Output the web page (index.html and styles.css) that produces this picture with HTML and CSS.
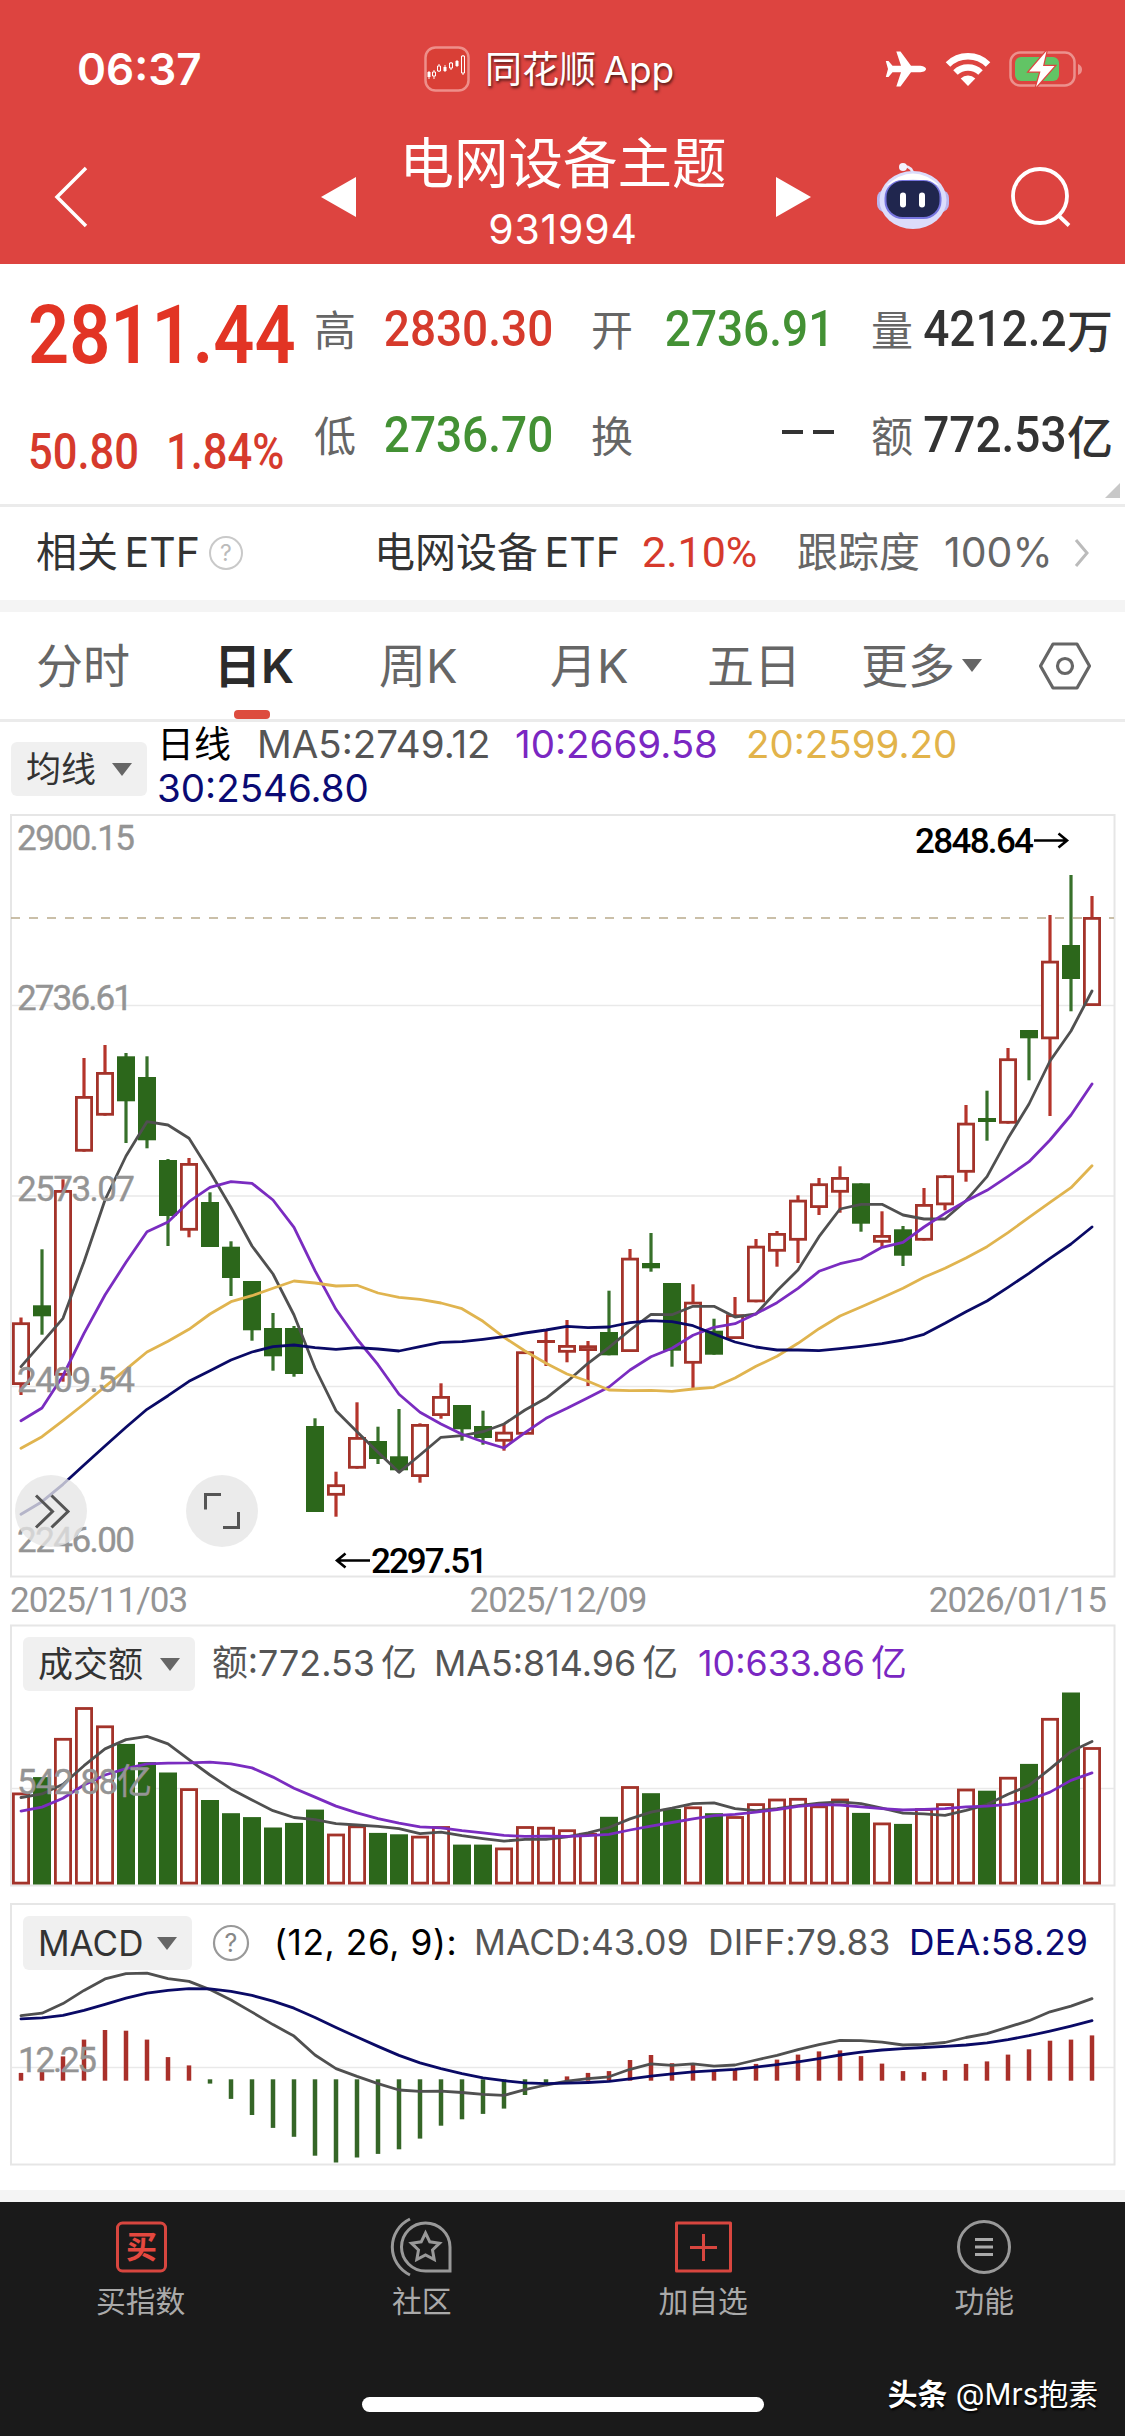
FILE: index.html
```html
<!DOCTYPE html>
<html lang="zh-CN">
<head>
<meta charset="utf-8">
<title>电网设备主题 931994</title>
<link rel="stylesheet" href="styles.css">
</head>
<body>
<header class="top">
  <div class="status">
    <span class="clock">06:37</span>
    <span class="brand">
      <svg class="brand-icon" width="46" height="46" viewBox="0 0 46 46"><rect x="1.5" y="1.5" width="43" height="43" rx="10" fill="#d93f36" stroke="#ee8f8a" stroke-width="2.5"/><path d="M5 25v8M10 24v9M15 18v8M21 19v7M27 16v8M33 14v7M39 9v20" stroke="#f7d9d6" stroke-width="1.2"/><path d="M3.500 26h3v5h-3zM19.500 21h3v4h-3zM31.500 15h3v5h-3z" fill="#fff"/><path d="M8.500 26h3v4h-3zM13.500 20h3v5h-3zM25.500 17h3v5h-3zM37.500 10h3v17h-3z" fill="#d93f36" stroke="#fff"/></svg>
      <span>同花顺 App</span>
    </span>
    <span class="sys">
      <svg width="42" height="38" viewBox="0 0 42 38"><path d="M41 19c0-2-3-3.300-7-3.300h-8L15.500 1.500h-4.200L16 15.700H7.500L3.500 11H.8l2.200 8-2.200 8h2.700l4-4.700H16L11.300 36.500h4.200L26 22.300h8c4 0 7-1.300 7-3.300z" fill="#fff"/></svg>
      <svg width="46" height="36" viewBox="0 0 46 36"><g fill="none" stroke="#fff" stroke-width="6.500"><path d="M3 13.500a28.500 28.500 0 0 1 40 0"/><path d="M10.500 21.500a18 18 0 0 1 25 0"/></g><path d="M23 35l-7.300-7.500a10.500 10.500 0 0 1 14.600 0z" fill="#fff"/></svg>
      <svg width="74" height="38" viewBox="0 0 74 38"><rect x="1.500" y="2.500" width="64" height="33" rx="9.500" fill="none" stroke="#ec918d" stroke-width="2.500"/><path d="M69 14v11q4-1.500 4-5.500t-4-5.500z" fill="#ec918d"/><rect x="6" y="7" width="44" height="24" rx="6" fill="#62c465"/><path d="M37.500 1L20 21.500h11.500L27 37l18.500-21H34z" fill="#fff" stroke="#dd4440" stroke-width="2.500" paint-order="stroke"/></svg>
    </span>
  </div>
  <div class="nav">
    <svg class="back" width="36" height="64" viewBox="0 0 36 64"><path d="M33 3L4 32l29 29" fill="none" stroke="#fff" stroke-width="3.500"/></svg>
    <svg class="prev" width="36" height="40" viewBox="0 0 36 40"><path d="M35 0v40L0 20z" fill="#fff"/></svg>
    <div class="title"><h1>电网设备主题</h1><span class="code">931994</span></div>
    <svg class="next" width="36" height="40" viewBox="0 0 36 40"><path d="M1 0v40l35-20z" fill="#fff"/></svg>
    <svg class="robot" width="74" height="70" viewBox="0 0 74 70"><path d="M37 14Q37 6 28 5" fill="none" stroke="#e9e8fb" stroke-width="2.500"/><circle cx="27" cy="6" r="4" fill="#f4f3ff"/><rect x="1" y="29" width="72" height="22" rx="8" fill="#b9b6ee"/><ellipse cx="37" cy="39" rx="33.500" ry="29" fill="#dcdcfb"/><path d="M10 25Q37 0 64 25Q37 12 10 25z" fill="#fff"/><rect x="8.500" y="19" width="57" height="39" rx="18" fill="#7775df"/><rect x="10.500" y="20" width="53" height="36" rx="16" fill="#20264e"/><rect x="24" y="31.500" width="6" height="15" rx="3" fill="#fff"/><rect x="43" y="31.500" width="6" height="15" rx="3" fill="#fff"/></svg>
    <svg class="search" width="62" height="62" viewBox="0 0 62 62"><g fill="none" stroke="#fff" stroke-width="3.800"><circle cx="30" cy="30" r="27"/><path d="M48.500 49.500l10.500 10"/></g></svg>
  </div>
</header>

<section class="quote">
  <div class="last">
    <b class="price din">2811.44</b>
    <div class="change"><b class="din">50.80</b><b class="din">1.84%</b></div>
  </div>
  <dl class="stats">
    <dt>高</dt><dd class="up"><span class="din">2830.30</span></dd>
    <dt>开</dt><dd class="down"><span class="din">2736.91</span></dd>
    <dt>量</dt><dd><span class="din">4212.2</span>万</dd>
    <dt>低</dt><dd class="down"><span class="din">2736.70</span></dd>
    <dt>换</dt><dd class="dash"><i></i><i></i></dd>
    <dt>额</dt><dd><span class="din">772.53</span>亿</dd>
  </dl>
  <svg class="corner" width="15" height="15" viewBox="0 0 15 15"><path d="M15 0v15H0z" fill="#c8c8c8"/></svg>
</section>

<section class="etf">
  <span class="etf-label">相关 ETF</span>
  <svg class="help" width="36" height="36" viewBox="0 0 36 36"><circle cx="18" cy="18" r="16" fill="none" stroke="#c9c9c9" stroke-width="2"/><text x="18" y="26" text-anchor="middle" font-size="23" fill="#bbb">?</text></svg>
  <span class="etf-name">电网设备 ETF</span>
  <span class="etf-pct din">2.10%</span>
  <span class="etf-track">跟踪度</span>
  <span class="etf-num">100%</span>
  <svg class="more" width="17" height="32" viewBox="0 0 17 32"><path d="M3 3l11 13L3 29" fill="none" stroke="#bbb" stroke-width="3"/></svg>
</section>

<nav class="tabs">
  <span>分时</span><span class="on">日K</span><span>周K</span><span>月K</span><span>五日</span><span class="drop">更多<i class="arrow"></i></span>
  <svg width="54" height="50" viewBox="0 0 54 50"><g fill="none" stroke="#666" stroke-width="3.200" stroke-linejoin="round"><path d="M15 3h24l12.500 22L39 47H15L2.500 25z"/><circle cx="27" cy="25" r="7.500"/></g></svg>
</nav>

<section class="legend">
  <button class="pick">均线<i class="arrow"></i></button>
  <div class="ma"><span class="c-day">日线</span><span class="c-5">MA5:2749.12</span><span class="c-10">10:2669.58</span><span class="c-20">20:2599.20</span><span class="c-30">30:2546.80</span></div>
</section>

<svg class="chart" id="kline" width="1125" height="765" viewBox="0 813 1125 765">
  <g class="grid"><path d="M11 1005.500H1114M11 1196H1114M11 1386.500H1114"/><rect x="11" y="815" width="1103.500" height="761.500"/></g>
  <path d="M11 918H1114" class="last-line"/>
  <g class="plot"></g>
  <g class="axis"><text x="17" y="850" textLength="118">2900.15</text><text x="17" y="1010" textLength="116">2736.61</text><text x="17" y="1201" textLength="118">2573.07</text><text x="17" y="1392" textLength="118">2409.54</text><text x="17" y="1552" textLength="118">2246.00</text></g>
  <g class="extreme"><text x="915" y="853" textLength="119">2848.64</text><path d="M1034 840.500H1066M1058.500 833.500l8.500 7-8.500 7"/><text x="371" y="1573" textLength="117">2297.51</text><path d="M370 1560.500H338M345.500 1553.500l-8.500 7 8.500 7"/></g>
  <g class="tool"><circle cx="51" cy="1511" r="36"/><path d="M36 1495.500l16.500 16-16.500 16M51.500 1495.500l16.500 16-16.500 16"/></g>
  <g class="tool"><circle cx="222" cy="1511" r="36"/><path d="M205.500 1509.500v-15h15.500M238.500 1512v15.500h-15.500"/></g>
</svg>
<div class="dates"><span>2025/11/03</span><span>2025/12/09</span><span>2026/01/15</span></div>

<section class="panel volume">
  <div class="bar">
    <button class="pick">成交额<i class="arrow"></i></button>
    <span class="v1">额:772.53 亿</span><span class="v2">MA5:814.96 亿</span><span class="v3">10:633.86 亿</span>
  </div>
  <svg class="chart" id="volume" width="1125" height="265" viewBox="0 1624 1125 265">
    <g class="grid"><path d="M11 1788.500H1114"/><rect x="11" y="1625.500" width="1103.500" height="260"/></g>
    <g class="plot"></g>
    <g class="axis"><text x="17" y="1794" textLength="135">542.88亿</text></g>
  </svg>
</section>

<section class="panel macd">
  <div class="bar">
    <button class="pick">MACD<i class="arrow"></i></button>
    <svg class="help" width="38" height="38" viewBox="0 0 38 38"><circle cx="19" cy="19" r="17" fill="none" stroke="#999" stroke-width="2.200"/><text x="19" y="28" text-anchor="middle" font-size="25" fill="#888">?</text></svg>
    <span class="m1">(12, 26, 9):</span><span class="m2">MACD:43.09</span><span class="m3">DIFF:79.83</span><span class="m4">DEA:58.29</span>
  </div>
  <svg class="chart" id="macd" width="1125" height="265" viewBox="0 1903 1125 265">
    <g class="grid"><path d="M11 2067.500H1114"/><rect x="11" y="1904" width="1103.500" height="260.500"/></g>
    <g class="plot"></g>
    <g class="axis"><text x="18" y="2072" textLength="79">12.25</text></g>
  </svg>
</section>

<footer class="dock">
  <div class="actions">
    <div class="action"><svg width="60" height="60" viewBox="0 0 60 60"><rect x="6.500" y="6" width="48" height="48" rx="5" fill="none" stroke="#d8463f" stroke-width="3"/><text x="30.500" y="41" text-anchor="middle" class="buy">买</text></svg><span>买指数</span></div>
    <div class="action"><svg width="64" height="60" viewBox="0 0 64 60"><g fill="none" stroke="#999" stroke-width="3"><path d="M20 2a31 31 0 0 0 0 56"/><path d="M35.500 6a24 24 0 1 0 0 48H60V30A24.500 24 0 0 0 35.500 6z"/><path d="M35.500 16l4.300 8.800 9.700 1.400-7 6.800 1.700 9.600-8.700-4.600-8.700 4.600 1.700-9.600-7-6.800 9.700-1.400z"/></g></svg><span>社区</span></div>
    <div class="action"><svg width="60" height="60" viewBox="0 0 60 60"><path d="M3.500 6h54v48h-54zM30.500 17v27M17 30.500h27" fill="none" stroke="#d8463f" stroke-width="3" stroke-linejoin="round"/></svg><span>加自选</span></div>
    <div class="action"><svg width="60" height="60" viewBox="0 0 60 60"><circle cx="30" cy="30" r="25.500" fill="none" stroke="#999" stroke-width="3"/><path d="M21 22.500h18M21 30h18M21 37.500h18" stroke="#aaa" stroke-width="3"/></svg><span>功能</span></div>
  </div>
  <div class="home"></div>
  <div class="mark"><b>头条</b> @Mrs抱素</div>
</footer>
<script src="chart.js"></script>
</body>
</html>
```
FILE: styles.css
```css
* { box-sizing: border-box; }
body { margin: 0; width: 1125px; height: 2436px; background: #fff; color: #333; font-family: "Inter", "Noto Sans CJK SC", sans-serif; font-size: 37px; line-height: 1; overflow: hidden; }
svg { display: block; flex: none; overflow: visible; }
span, b, dt, dd { white-space: nowrap; }
.din { display: inline-block; font-family: "Roboto", "Noto Sans CJK SC", sans-serif; font-weight: 500; }

/* header */
.top { height: 264px; background: #dd4440; color: #fff; }
.status { height: 138px; display: grid; grid-template-columns: 424px 457px 1fr; align-items: center; }
.clock { padding-left: 77px; font-size: 44px; font-weight: 600; }
.brand { display: flex; align-items: center; gap: 15px; font-size: 37px; text-shadow: 1px 2px 3px rgba(0,0,0,.65); word-spacing: -3px; }
.sys { display: flex; align-items: center; padding-left: 4px; gap: 18px; }
.nav { height: 126px; display: grid; grid-template-columns: 53px 268px 36px 418px 101px 134px 1fr; align-items: center; padding-bottom: 8px; }
.back { grid-column: 2; }
.prev { grid-column: 3; }
.title { display: flex; flex-direction: column; align-items: center; gap: 18px; margin: -10px 6px 0 0; }
.title h1 { margin: 0; font-size: 54.500px; font-weight: 400; line-height: 56px; }
.code { font-size: 41px; line-height: 40px; letter-spacing: .8px; }
.robot { margin-top: -3px; }

/* quote */
.quote { height: 243px; display: grid; grid-template-columns: 314px 1fr; border-bottom: 3px solid #ebebeb; position: relative; }
.last { padding: 30px 0 0 28px; color: #e23424; }
.price { font-size: 81px; line-height: 84px; font-weight: 600; transform: scaleX(.89); transform-origin: 0 50%; }
.change { display: flex; margin-top: 49px; color: #d63a2c; }
.change b { font-size: 50px; line-height: 50px; width: 138px; transform: scaleX(.87); transform-origin: 0 50%; }
.stats { margin: 0; display: grid; grid-template-columns: 39px 200px 80px 201px 79px 200px; grid-template-rows: 106px 106px; padding-top: 14px; align-items: center; }
.stats dt { font-size: 42px; color: #666; text-align: right; }
.stats dd { margin: 0; display: flex; justify-content: flex-end; align-items: center; font-size: 46px; font-weight: 500; }
.stats dd .din { font-size: 50.500px; transform: scaleX(.91); transform-origin: 100% 50%; margin-top: -3px; }
.up, .etf-pct { color: #d63a2c; }
.down { color: #439134; }
.stats .dash { gap: 10px; }
.dash i { width: 21px; height: 4px; background: #333; margin-top: -10px; }
.corner { position: absolute; right: 5px; bottom: 6px; }

/* related fund */
.etf { height: 93px; display: grid; grid-template-columns: 172px 166px 268px 155px 147px 129px 1fr; padding: 0 0 2px 36px; align-items: center; font-size: 41px; word-spacing: -5px; }
.etf-pct { font-size: 43px; font-weight: 400; }
.etf-track, .etf-num { color: #666; }

/* period tabs */
.tabs { height: 122px; border-top: 12px solid #f4f4f4; border-bottom: 3px solid #ebebeb; display: grid; grid-template-columns: 178px 165px 171px 157px 154px 177px 1fr; padding-left: 36px; align-items: center; color: #666; font-size: 47px; }
.tabs .on { color: #2b2b2b; font-weight: 600; position: relative; line-height: 107px; }
.on::after { content: ""; position: absolute; left: 20px; bottom: 0; width: 36px; height: 9px; border-radius: 4px; background: #dd4c3e; }
.arrow { display: inline-block; border: 10px solid transparent; border-width: 13px 10px 0; border-top-color: #666; }
.drop { display: flex; align-items: center; gap: 7px; }

/* moving average legend */
.legend { height: 91px; display: flex; padding: 0 0 0 11px; }
.pick { border: 0; margin: 20px 0 0; padding: 0 15px; width: 136px; height: 54px; border-radius: 6px; background: #f0f0f0; color: #333; font: inherit; font-size: 35px; display: flex; align-items: center; justify-content: space-between; white-space: nowrap; }
.ma { margin-left: 10px; display: grid; grid-template-columns: 100px 258px 231px 1fr; grid-template-rows: 44px 45px; align-items: center; font-size: 38.500px; }
.c-day { color: #000; font-size: 37px; }
.c-5 { color: #555; }
.c-10, .v3 { color: #7a27c2; }
.c-20 { color: #e2b34a; }
.c-30 { grid-column: 1; color: #0a0a73; }

/* charts */
.grid path { stroke: #e9e9e9; stroke-width: 1.500; fill: none; }
.grid rect { stroke: #e6e6e6; stroke-width: 2; fill: none; }
.last-line { stroke: #b9aa8c; stroke-width: 1.500; stroke-dasharray: 9 9; }
.axis text { font: 400 35px "Roboto", "Noto Sans CJK SC", sans-serif; fill: #949494; stroke: #949494; stroke-width: .4; }
.extreme text { font: 500 35px "Roboto", sans-serif; fill: #000; }
.extreme path { fill: none; stroke: #000; stroke-width: 2.600; }
.tool circle { fill: rgba(230,230,230,.78); }
.tool path { fill: none; stroke: #555; stroke-width: 3; }
.dates { height: 46px; padding: 0 19px 1px 10px; display: flex; justify-content: space-between; align-items: center; font: 400 35px/1 "Roboto", sans-serif; color: #949494; letter-spacing: -.9px; }
.panel { position: relative; height: 279px; }
.bar { position: absolute; left: 23px; top: 0; right: 12px; height: 80px; display: flex; align-items: center; font-size: 35.300px; color: #555; }
.volume .bar { word-spacing: -4px; font-size: 35.800px; }
.bar .pick { margin: 0; width: 172px; }
.v1 { margin-left: 17px; width: 222px; }
.v2 { width: 264px; }
.macd .pick { width: 169px; }
.macd .help { margin: 0 24px 0 20px; }
.m1 { width: 200px; color: #000; letter-spacing: .6px; }
.m2 { width: 234px; letter-spacing: .1px; }
.m3 { width: 201px; letter-spacing: .2px; }
.m4 { color: #0a0a73; letter-spacing: .2px; }

/* bottom dock */
.dock { height: 246px; margin-top: 8px; border-top: 12px solid #f4f4f4; background: #1a1a1a; display: flex; flex-direction: column; position: relative; }
.actions { display: grid; grid-template-columns: repeat(4, 1fr); padding-top: 15px; }
.action { display: flex; flex-direction: column; align-items: center; gap: 10px; font-size: 29.800px; color: #aaa; }
.buy { font: 700 31px "Noto Sans CJK SC", sans-serif; fill: #e5483f; }
.home { width: 402px; height: 15px; border-radius: 8px; background: #fff; margin: 80px auto 0; }
.mark { position: absolute; right: 27px; bottom: 26px; color: #fff; font-size: 29.800px; text-shadow: 1px 2px 2px #000; }
```
FILE: chart.js
```javascript
// Trading days are 21px apart, the first one centred on x = 21.
const STEP = 21, RED = '#a3332a', GREEN = '#2c671b';
const cx = i => STEP + STEP * i;
const put = (id, html) => { document.querySelector('#' + id + ' .plot').innerHTML = html; };

// A rise is drawn as a hollow red box, a fall as a solid green one.
function box(i, top, bottom, up) {
  const x = cx(i), h = bottom - top;
  if (!up) return `<rect x="${x - 9}" y="${top}" width="18" height="${h}" fill="${GREEN}"/>`;
  if (h < 4) return `<rect x="${x - 9}" y="${top}" width="18" height="${h}" fill="${RED}"/>`;
  return `<rect x="${x - 7.6}" y="${top + 1.4}" width="15.2" height="${h - 2.8}" fill="#fff" stroke="${RED}" stroke-width="2.8"/>`;
}
function line(ys, colour) {
  return `<polyline points="${ys.map((y, i) => cx(i) + ',' + y).join(' ')}" fill="none" stroke="${colour}" stroke-width="2.8" stroke-linejoin="round" stroke-linecap="round"/>`;
}

// [rise?, high, body top, body bottom, low]
const days = [
  [1,1317.5,1322.3,1385,1395],[0,1249.3,1305.3,1316.3,1334.7],[1,1179.3,1190,1375.7,1381.7],[1,1058,1096,1151.7,1151.7],
  [1,1045,1072,1115.7,1115.7],[0,1053,1056.3,1101.3,1143],[0,1056.3,1077,1140.3,1148.3],[0,1159,1160,1216,1246],
  [1,1158,1163,1230.7,1237.3],[0,1192.3,1202,1247,1247],[0,1241.3,1246.7,1278,1296],[0,1281,1281,1330.3,1340.7],
  [0,1313,1328,1356.3,1370.7],[0,1326,1328,1374,1376.7],[0,1418.3,1426,1512,1512],[1,1471.7,1484.3,1495.7,1516.7],
  [1,1402.3,1437,1468.7,1468.7],[0,1426.7,1441,1459,1464],[0,1409,1456.3,1470.3,1472.3],[1,1423.3,1424,1477,1482.7],
  [1,1383.3,1396,1416,1418.7],[0,1405,1405,1429.3,1440.7],[0,1410.7,1426,1438,1444.7],[1,1424.3,1431.7,1441.7,1450.7],
  [1,1351.3,1351.3,1434.7,1434.7],[1,1331,1340,1343,1366],[1,1320,1345,1352.7,1362.3],[1,1341,1345.3,1351,1386],
  [0,1290.7,1332,1355.3,1355.3],[1,1249,1257.7,1352,1352],[0,1233,1263,1268.3,1271.7],[0,1283,1283,1350.7,1366.7],
  [1,1284.3,1301.7,1363.7,1389.3],[0,1318.7,1330.7,1354.7,1354.7],[1,1297,1314.3,1339,1339],[1,1239,1245.7,1302.3,1302.3],
  [1,1231,1233,1251.7,1266.7],[1,1195.3,1199.7,1240.7,1263],[1,1178,1183.3,1208,1215],[1,1166.3,1177,1192.7,1212.7],
  [0,1183.3,1183.3,1223.7,1231.7],[1,1211.3,1235,1242.7,1247.3],[0,1226,1229.3,1255.7,1266],[1,1188,1204,1240.7,1240.7],
  [1,1175,1175.3,1205.3,1210.3],[1,1105,1122.7,1172.7,1181.7],[0,1090.7,1118,1122,1140.7],[1,1048,1058.3,1123.7,1123.7],
  [0,1030,1030,1038.3,1080.3],[1,915,960.7,1039.3,1116],[0,875,945,979,1011.3],[1,896,917,1006,1006]
];
const ma5 = [1366.7,1342.7,1318.3,1261.7,1200,1156,1121.7,1125,1138.3,1171.7,1207.5,1246,1274,1315,1368,1410.7,1431.7,1452.3,1472.3,1455,1437.3,1435.7,1431.7,1424,1410,1398.3,1381.7,1363.3,1347.3,1330,1314.3,1314.7,1306.3,1306.3,1317,1314,1290.7,1270,1236.7,1209,1204.3,1204.3,1215,1219,1219,1200.7,1176.7,1138.3,1104,1061,1031,991];
const ma10 = [1420.7,1408,1375.7,1333.3,1295,1262.3,1231.7,1222,1201.7,1187.3,1181.7,1183.3,1200,1227.3,1270.7,1309.3,1339,1364.7,1394.3,1412.3,1424,1434.3,1441.7,1448,1432.7,1418.3,1408.3,1397.7,1387,1370,1356.7,1348.3,1335.3,1327.3,1323.7,1313.7,1302.7,1288.3,1271.3,1263.7,1259,1247.3,1242.3,1227,1213.3,1201,1190.3,1176.3,1161.7,1140,1115,1084];
const ma20 = [1448.3,1436.7,1420.7,1404,1386.7,1369.3,1352,1341.3,1329.3,1314,1301.7,1295.7,1288.3,1281,1283,1286,1285.3,1293,1297.3,1299.3,1303,1308.7,1321.3,1337.3,1351,1363.3,1374,1381.3,1390,1390.7,1390.3,1391.3,1389,1387.3,1378,1366.3,1356.3,1343.3,1328.7,1316,1307,1297.7,1288.3,1277.3,1268.3,1258,1246.7,1232.7,1217.3,1202.3,1187.7,1165.7];
const ma30 = [1514.3,1501.7,1484.3,1465,1446,1427.3,1409.3,1395.7,1381.3,1370.7,1360,1352,1346.7,1345,1347.7,1349.3,1347.7,1349,1351,1346.7,1342.3,1341.7,1339.3,1336.7,1333,1330,1326.3,1327.7,1327,1322.7,1320.7,1321.7,1325.7,1334,1342,1347,1350,1350,1350.7,1348.7,1346.3,1343.7,1340,1334.3,1323.3,1311.7,1301,1287.3,1273.3,1258.3,1244,1227];

put('kline', days.map(([up, hi, top, bottom, lo], i) =>
  `<path d="M${cx(i)} ${hi}V${lo}" stroke="${up ? '#b5342b' : '#37702a'}" stroke-width="3.2"/>` + box(i, top, bottom, up)).join('')
  + line(ma5, '#505050') + line(ma10, '#7a2cc0') + line(ma20, '#e0b44f') + line(ma30, '#0a0a66'));

// Volume and MACD series share one scale: 2.8 units per pixel below y = 1620.
const y = v => +(1620 + v / 2.8).toFixed(1);
const volume = [483,440,330,244,295,347,398,427,471,504,541,552,581,568,531,598,575,596,600,604,577,629,629,637,577,579,586,596,551,465,485,529,522,541,549,513,500,498,519,500,540,567,571,527,513,472,478,439,403,274,203,356];
const volumeDown = new Set([1,5,6,7,9,10,11,12,13,14,17,18,21,22,28,30,31,33,40,42,46,48,50]);
const v5 = [497,487,460,408,361,335,326,347,391,434,473,504,534,553,559,570,574,578,584,598,594,604,612,619,614,614,607,596,581,557,538,527,514,512,528,534,528,520,513,509,514,527,541,543,547,533,517,488,463,417,368,340];
const v10 = [535,524,499,462,434,416,403,401,400,398,403,414,440,471,496,521,540,556,569,579,582,590,596,603,606,605,606,604,600,588,577,567,557,548,544,538,531,522,517,518,523,528,532,530,528,523,521,516,504,482,449,428];
put('volume', volume.map((v, i) => box(i, y(v), 1884.5, !volumeDown.has(i))).join('')
  + line(v5.map(y), '#505050') + line(v10.map(y), '#7a2cc0'));

const hist = [1268,1264,1222,1175,1148,1150,1175,1224,1247,1298,1341,1386,1422,1447,1500,1519,1505,1495,1482,1452,1416,1398,1383,1368,1330,1300,1278,1268,1263,1232,1218,1241,1244,1260,1260,1243,1231,1217,1208,1205,1221,1242,1263,1266,1260,1243,1236,1217,1202,1178,1175,1163];
const diff = [1108,1101,1074,1037,1005,990,989,1004,1012,1035,1064,1098,1133,1165,1218,1256,1278,1298,1316,1320,1319,1323,1328,1331,1315,1302,1291,1284,1279,1258,1243,1247,1243,1249,1246,1232,1219,1203,1189,1177,1178,1182,1190,1188,1183,1169,1158,1140,1122,1097,1081,1060];
const dea = [1117,1114,1107,1093,1076,1059,1045,1037,1032,1033,1040,1051,1067,1087,1113,1141,1168,1194,1219,1240,1256,1270,1282,1290,1296,1298,1297,1295,1292,1285,1277,1271,1265,1262,1258,1252,1245,1237,1228,1218,1210,1204,1200,1197,1194,1190,1184,1175,1164,1151,1137,1122];
put('macd', hist.map((v, i) => v < 1288
  ? `<path d="M${cx(i)} ${y(v)}V2080.700" stroke="#a9302a" stroke-width="4.500"/>`
  : `<path d="M${cx(i)} 2079.300V${y(v)}" stroke="#356627" stroke-width="4.500"/>`).join('')
  + line(diff.map(y), '#505050') + line(dea.map(y), '#0a0a66'));
```
